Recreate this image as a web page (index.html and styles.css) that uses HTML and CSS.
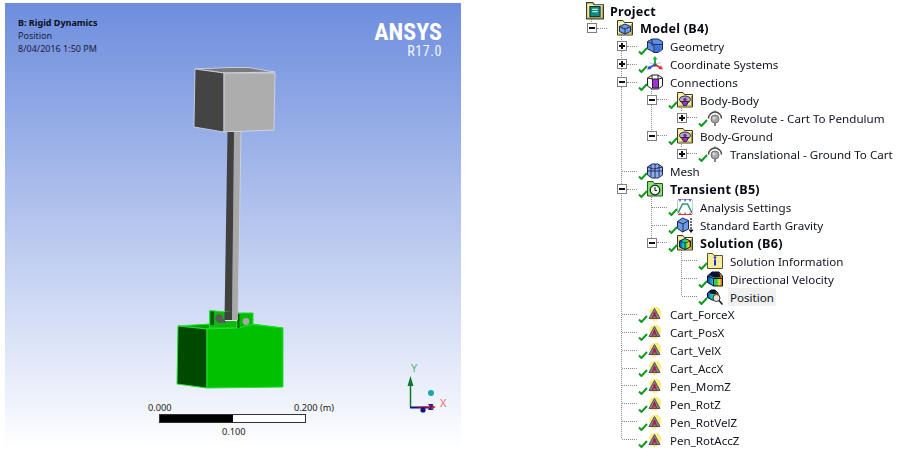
FILE: index.html
```html
<!DOCTYPE html>
<html lang="en">
<head>
<meta charset="utf-8">
<title>Rigid Dynamics - Position</title>
<link rel="stylesheet" href="styles.css">
</head>
<body>
<svg class="defs" width="0" height="0" aria-hidden="true">
  <defs>
    <linearGradient id="rainbow" x1="0" y1="0" x2="1" y2="0">
      <stop offset="0" stop-color="#1c2fd0"/><stop offset=".35" stop-color="#12c8c8"/><stop offset=".6" stop-color="#30d030"/><stop offset=".8" stop-color="#f0e020"/><stop offset="1" stop-color="#e83a10"/>
    </linearGradient>
    <symbol id="i-folder" viewBox="0 0 16 16">
      <path d="M0.500 15V0.500h5.500l1.500 2H15.500V15z" fill="#f3e89a" stroke="#3c3a20"/>
      <path d="M1.500 3.500h13" stroke="#fffbd8"/>
      <path d="M14.500 4v10.500M1.500 14h13" stroke="#a89c50"/>
    </symbol>
    <symbol id="i-project" viewBox="0 0 16 16">
      <use href="#i-folder" width="16" height="16"/>
      <rect x="3.500" y="4" width="9" height="9" fill="#0e8a80" stroke="#10303a"/>
      <path d="M5.500 6.500h5M5.500 8.500h5" stroke="#b8f0e0"/>
    </symbol>
    <symbol id="i-model" viewBox="0 0 16 16">
      <use href="#i-folder" width="16" height="16"/>
      <path d="M8 4l5.500 2.500v5L8 14l-5.500-2.500v-5z" fill="#6e9be8" stroke="#1a2a50"/>
      <path d="M2.500 6.500L8 9l5.500-2.500M8 9v5" fill="none" stroke="#1a2a50"/>
    </symbol>
    <symbol id="i-geometry" viewBox="0 0 16 16">
      <path d="M0.500 3.500L5 1h6l4.500 2.500v8L11 14.500H7l-3-2-3.500-1.500z" fill="#5c8ee6" stroke="#1c2a58"/>
      <path d="M7 6.500h8.500M7 6.500v8M0.500 3.500L7 6.500M5 1v7" fill="none" stroke="#1c2a58"/>
      <path d="M8 7.500h6.500v5L11 14H8z" fill="#3f72d6"/>
    </symbol>
    <symbol id="i-coord" viewBox="0 0 16 16">
      <path d="M8 8V2" stroke="#22b04c" stroke-width="2"/>
      <path d="M8 0L5.500 3.500h5z" fill="#22b04c"/>
      <path d="M8 8.500L3 11.500" stroke="#2a50d8" stroke-width="2"/>
      <path d="M0 13.500L2 9.500l2.500 3.500z" fill="#2a50d8"/>
      <path d="M8 8.500l5 3" stroke="#e03030" stroke-width="2"/>
      <path d="M16 13.500L14 9.500l-2.500 3.500z" fill="#e03030"/>
      <path d="M8 8.500L2 6.500M8 8.500l6-2" stroke="#c8c8c8"/>
      <circle cx="8" cy="9" r="1.800" fill="#555"/>
    </symbol>
    <symbol id="i-conn" viewBox="0 0 16 16">
      <path d="M0.500 4L5 1h6l4.500 3v8L11 15H5l-4.500-3z" fill="#fff" stroke="#222"/>
      <path d="M5.500 5h6v9h-6z" fill="#a030d8" stroke="#222"/>
      <path d="M0.500 4l5 1M11.500 5l4-1M5 1v4M11 1v4" stroke="#222" fill="none"/>
    </symbol>
    <symbol id="i-body" viewBox="0 0 16 16">
      <use href="#i-folder" width="16" height="16"/>
      <ellipse cx="8" cy="7.500" rx="5.500" ry="3.500" fill="#b8a8c8" stroke="#302838"/>
      <path d="M4.500 9.500h7L9.500 13.500h-3z" fill="#a030c8" stroke="#302838"/>
      <circle cx="8" cy="7.500" r="1.700" fill="#6a2aa0"/>
    </symbol>
    <symbol id="i-joint" viewBox="0 0 16 16">
      <path d="M1.500 8.500a6.500 6.500 0 0 1 13 0" fill="none" stroke="#444" stroke-width="1.400"/>
      <circle cx="8" cy="9" r="4" fill="#a8a8a8" stroke="#707070"/>
      <circle cx="7" cy="8" r="1.500" fill="#dcdcdc"/>
      <path d="M8 0.500v2.500M8 13v3" stroke="#666" stroke-width="1.600"/>
    </symbol>
    <symbol id="i-mesh" viewBox="0 0 16 16">
      <path d="M0.500 4L5 1h6l4.500 3v8L11 15H5l-4.500-3z" fill="#8fb0ee" stroke="#1c2450"/>
      <path d="M0.500 8h15M4 2V13.500M8 1v14M12 2V13.500M0.500 4l6 2 9-2" fill="none" stroke="#1c2450" stroke-width=".9"/>
    </symbol>
    <symbol id="i-transient" viewBox="0 0 16 16">
      <path d="M0.500 15V0.500h5.500l1.500 2H15.500V15z" fill="#8ee070" stroke="#1c5a20"/>
      <circle cx="8" cy="9" r="4.800" fill="#e8f4e0" stroke="#123" stroke-width="1.200"/>
      <path d="M8 6v3.500h2" fill="none" stroke="#123"/>
    </symbol>
    <symbol id="i-analysis" viewBox="0 0 16 16">
      <path d="M1 14L5.500 5h5L15 14" fill="none" stroke="#2f9a70" stroke-width="1.600"/>
      <path d="M0.500 1v14M15.500 1v14" stroke="#c8c8c8"/>
      <path d="M1 0.500h14" stroke="#9898c8"/>
      <path d="M2 0.500l1 2.500 1-2.500zM7 0.500l1 2.500 1-2.500zM12 0.500l1 2.500 1-2.500z" fill="#2030c8"/>
      <path d="M1 15.500h14" stroke="#d84040"/>
      <path d="M2 15.500l1-2.500 1 2.500zM7 15.500l1-2.500 1 2.500zM12 15.500l1-2.500 1 2.500z" fill="#d02020"/>
    </symbol>
    <symbol id="i-gravity" viewBox="0 0 16 16">
      <path d="M0.500 4.500L5.500 1 11.500 3.500v8.500L5.500 15 0.500 11.500z" fill="#6e9be8" stroke="#1a2a50"/>
      <path d="M0.500 4.500l5.500 2.500 5.500-3.500M6 7v8" fill="none" stroke="#1a2a50"/>
      <path d="M14 1v12" stroke="#111" stroke-dasharray="2 1" stroke-width="1.200"/>
      <path d="M11.500 12.500h5L14 16z" fill="#111"/>
    </symbol>
    <symbol id="i-solution" viewBox="0 0 16 16">
      <use href="#i-folder" width="16" height="16"/>
      <path d="M2.500 6L8 3.500 13.500 6v6L8 14.500 2.500 12z" fill="url(#rainbow)" stroke="#123"/>
      <path d="M2.500 6L8 8l5.500-2M8 8v6.500" fill="none" stroke="#123" stroke-width=".8"/>
    </symbol>
    <symbol id="i-info" viewBox="0 0 16 16">
      <path d="M0.500 15.500V0.500h5L7 2.500h8.500v13z" fill="#f8ec9c" stroke="#5c5528"/>
      <circle cx="8" cy="4.500" r="1.300" fill="#1a2ed0"/>
      <rect x="7" y="6.500" width="2" height="6" fill="#1a2ed0"/>
    </symbol>
    <symbol id="i-velocity" viewBox="0 0 16 16">
      <path d="M0.500 5L5 1h7l3.500 4v10h-9L0.500 11.500z" fill="url(#rainbow)" stroke="#101020"/>
      <path d="M0.500 5l6 2.500h9M6.500 7.500V15" fill="none" stroke="#101020"/>
      <path d="M5 1L2 4 7 6.500h7L12 1z" fill="#101030"/>
    </symbol>
    <symbol id="i-position" viewBox="0 0 16 16">
      <path d="M0.500 4L4 1h4l3 3v7H5L0.500 8.500z" fill="url(#rainbow)" stroke="#101020"/>
      <path d="M3.500 1L1.500 3.500 5 5h5L8 1z" fill="#101030"/>
      <circle cx="9.500" cy="9" r="3.500" fill="#e8e2da" stroke="#333"/>
      <path d="M12 11.500l3.500 4" stroke="#111" stroke-width="1.500"/>
    </symbol>
    <symbol id="i-probe" viewBox="0 0 16 16">
      <path d="M4 11a6 6 0 1 1 10-3l-1 5z" fill="#f6ee80"/>
      <path d="M13 11a6 6 0 0 1-10 2h9z" fill="#f6ee80"/>
      <path d="M7.500 2.500L13 12.500H2z" fill="#8a8288" stroke="#55505a"/>
      <path d="M7.500 6L5.500 12M7.500 6L9.500 12" stroke="#98204a" stroke-width="1.100"/>
      <circle cx="7.500" cy="9.500" r="1.200" fill="#b02050"/>
    </symbol>
    <symbol id="i-check" viewBox="0 0 10 8">
      <path d="M1 4.500L3.500 7 9 1" fill="none" stroke="#109a20" stroke-width="2"/>
    </symbol>
  </defs>
</svg>

<main class="page">
  <section class="viewport">
    <svg class="scene" viewBox="0 0 456 447" width="456" height="447" aria-hidden="true">
      <g transform="translate(-5 -3)">
        <g stroke="#d8dce8" stroke-width=".8" stroke-linejoin="round">
          <path d="M195 69L231 67.500H248L275 72L224 73z" fill="#7a7a7a"/>
          <path d="M195 69L224 73V132L194 127z" fill="#444"/>
          <path d="M224 73H275L274 130L224 132z" fill="#adadad"/>
        </g>
        <path d="M234 132H241L238 320H232z" fill="#a8a8a8"/>
        <path d="M227.500 132H234L232 320H224.500z" fill="#404040"/>
        <path d="M241 132L238 320" stroke="#d4d8e4" stroke-width=".8"/>
        <g stroke="#22e030" stroke-width="1" stroke-linejoin="round">
          <path d="M178 326L210 324H237L253 324L283 328L207 329z" fill="#00a400"/>
          <path d="M209.500 310.500L237 313V328H209.500z" fill="#10b810"/>
          <path d="M237 313H253V328H237z" fill="#00bc00"/>
          <path d="M178 326L207 329V388L177 384z" fill="#004a00"/>
          <path d="M207 329L237 328L253 324.500L283 328V387L207 388z" fill="#00c000"/>
        </g>
        <path d="M210.500 311.500h3.500v13.500h-3.500zM237.500 314h2v14h-2z" fill="#006000"/>
        <path d="M218 319h8v4h-8z" fill="#5a5a5a"/>
        <circle cx="219" cy="318" r="3.800" fill="#5a5a5a"/>
        <path d="M224.500 312h7.500v8h-7.500z" fill="#404040"/>
        <path d="M232 312h6v8h-6z" fill="#a8a8a8"/>
        <path d="M225 320.500h12" stroke="#e8e8e8"/>
        <circle cx="246" cy="321.500" r="3.400" fill="#a8a8a8"/>
        <g class="triad">
          <path d="M410.500 385V407" stroke="#0a7a30" stroke-width="1.500"/>
          <path d="M410.500 376L407.500 386H413.500z" fill="#0a7a30"/>
          <path d="M410 407.500H434" stroke="#101090" stroke-width="2"/>
          <path d="M418 407H434" stroke="#d02020" stroke-width="1"/>
          <path d="M436 407L429 404V410z" fill="#d02020"/>
          <circle cx="423" cy="410" r="2.600" fill="#101090"/>
          <circle cx="431" cy="393" r="3" fill="#18a8b0"/>
        </g>
      </g>
    </svg>

    <div class="caption">
      <strong class="caption-title">B: Rigid Dynamics</strong>
      <span>Position</span>
      <span>8/04/2016 1:50 PM</span>
    </div>
    <div class="brand">
      <span class="brand-name">ANSYS</span>
      <span class="brand-rel">R17.0</span>
    </div>

    <span class="axis axis-y">Y</span>
    <span class="axis axis-x">X</span>
    <span class="axis axis-z">Z</span>

    <div class="scale">
      <div class="scale-top"><span>0.000</span><span>0.200 (m)</span></div>
      <div class="scale-bar"><i class="scale-fill"></i></div>
      <div class="scale-mid">0.100</div>
    </div>
  </section>

  <nav class="tree">
    <svg class="guides" width="330" height="461" aria-hidden="true">
      <g stroke="#8a8a8a" stroke-dasharray="1 1" fill="none">
        <path d="M4.500 17V24"/>
        <path d="M34.500 33V438.500"/>
        <path d="M64.500 87V134M64.500 197V239"/>
        <path d="M94.500 104V111M94.500 140V147M94.500 250V295"/>
      </g>
    </svg>

    <div class="row root"><svg class="icon icon-root"><use href="#i-project"/></svg><span class="label strong root-label">Project</span></div>
    <div class="row l1"><span class="tog minus"></span><span class="dash"></span><span class="cell"><svg class="icon"><use href="#i-model"/></svg></span><span class="label strong">Model (B4)</span></div>
    <div class="row l2"><span class="tog plus"></span><span class="dash"></span><span class="cell"><svg class="check"><use href="#i-check"/></svg><svg class="icon"><use href="#i-geometry"/></svg></span><span class="label">Geometry</span></div>
    <div class="row l2"><span class="tog plus"></span><span class="dash"></span><span class="cell"><svg class="check"><use href="#i-check"/></svg><svg class="icon"><use href="#i-coord"/></svg></span><span class="label">Coordinate Systems</span></div>
    <div class="row l2"><span class="tog minus"></span><span class="dash"></span><span class="cell"><svg class="check"><use href="#i-check"/></svg><svg class="icon"><use href="#i-conn"/></svg></span><span class="label">Connections</span></div>
    <div class="row l3"><span class="tog minus"></span><span class="dash"></span><span class="cell"><svg class="check"><use href="#i-check"/></svg><svg class="icon"><use href="#i-body"/></svg></span><span class="label">Body-Body</span></div>
    <div class="row l4"><span class="tog plus"></span><span class="dash"></span><span class="cell"><svg class="check"><use href="#i-check"/></svg><svg class="icon"><use href="#i-joint"/></svg></span><span class="label">Revolute - Cart To Pendulum</span></div>
    <div class="row l3"><span class="tog minus"></span><span class="dash"></span><span class="cell"><svg class="check"><use href="#i-check"/></svg><svg class="icon"><use href="#i-body"/></svg></span><span class="label">Body-Ground</span></div>
    <div class="row l4"><span class="tog plus"></span><span class="dash"></span><span class="cell"><svg class="check"><use href="#i-check"/></svg><svg class="icon"><use href="#i-joint"/></svg></span><span class="label">Translational - Ground To Cart</span></div>
    <div class="row l2"><span class="tog none"></span><span class="dash leaf"></span><span class="cell"><svg class="check"><use href="#i-check"/></svg><svg class="icon"><use href="#i-mesh"/></svg></span><span class="label">Mesh</span></div>
    <div class="row l2"><span class="tog minus"></span><span class="dash"></span><span class="cell"><svg class="check"><use href="#i-check"/></svg><svg class="icon"><use href="#i-transient"/></svg></span><span class="label strong">Transient (B5)</span></div>
    <div class="row l3"><span class="tog none"></span><span class="dash leaf"></span><span class="cell"><svg class="check"><use href="#i-check"/></svg><svg class="icon"><use href="#i-analysis"/></svg></span><span class="label">Analysis Settings</span></div>
    <div class="row l3"><span class="tog none"></span><span class="dash leaf"></span><span class="cell"><svg class="check"><use href="#i-check"/></svg><svg class="icon"><use href="#i-gravity"/></svg></span><span class="label">Standard Earth Gravity</span></div>
    <div class="row l3"><span class="tog minus"></span><span class="dash"></span><span class="cell"><svg class="check"><use href="#i-check"/></svg><svg class="icon"><use href="#i-solution"/></svg></span><span class="label strong">Solution (B6)</span></div>
    <div class="row l4"><span class="tog none"></span><span class="dash leaf"></span><span class="cell"><svg class="check"><use href="#i-check"/></svg><svg class="icon"><use href="#i-info"/></svg></span><span class="label">Solution Information</span></div>
    <div class="row l4"><span class="tog none"></span><span class="dash leaf"></span><span class="cell"><svg class="check"><use href="#i-check"/></svg><svg class="icon"><use href="#i-velocity"/></svg></span><span class="label">Directional Velocity</span></div>
    <div class="row l4"><span class="tog none"></span><span class="dash leaf"></span><span class="cell"><svg class="check"><use href="#i-check"/></svg><svg class="icon"><use href="#i-position"/></svg></span><span class="label selected">Position</span></div>
    <div class="row l2"><span class="tog none"></span><span class="dash leaf"></span><span class="cell"><svg class="check"><use href="#i-check"/></svg><svg class="icon"><use href="#i-probe"/></svg></span><span class="label">Cart_ForceX</span></div>
    <div class="row l2"><span class="tog none"></span><span class="dash leaf"></span><span class="cell"><svg class="check"><use href="#i-check"/></svg><svg class="icon"><use href="#i-probe"/></svg></span><span class="label">Cart_PosX</span></div>
    <div class="row l2"><span class="tog none"></span><span class="dash leaf"></span><span class="cell"><svg class="check"><use href="#i-check"/></svg><svg class="icon"><use href="#i-probe"/></svg></span><span class="label">Cart_VelX</span></div>
    <div class="row l2"><span class="tog none"></span><span class="dash leaf"></span><span class="cell"><svg class="check"><use href="#i-check"/></svg><svg class="icon"><use href="#i-probe"/></svg></span><span class="label">Cart_AccX</span></div>
    <div class="row l2"><span class="tog none"></span><span class="dash leaf"></span><span class="cell"><svg class="check"><use href="#i-check"/></svg><svg class="icon"><use href="#i-probe"/></svg></span><span class="label">Pen_MomZ</span></div>
    <div class="row l2"><span class="tog none"></span><span class="dash leaf"></span><span class="cell"><svg class="check"><use href="#i-check"/></svg><svg class="icon"><use href="#i-probe"/></svg></span><span class="label">Pen_RotZ</span></div>
    <div class="row l2"><span class="tog none"></span><span class="dash leaf"></span><span class="cell"><svg class="check"><use href="#i-check"/></svg><svg class="icon"><use href="#i-probe"/></svg></span><span class="label">Pen_RotVelZ</span></div>
    <div class="row l2"><span class="tog none"></span><span class="dash leaf"></span><span class="cell"><svg class="check"><use href="#i-check"/></svg><svg class="icon"><use href="#i-probe"/></svg></span><span class="label">Pen_RotAccZ</span></div>
  </nav>
</main>
</body>
</html>
```

FILE: styles.css
```css
* { box-sizing: border-box; }

html, body {
  margin: 0;
  height: 100%;
  background: #fff;
  overflow: hidden;
}

.defs { position: absolute; }

.page {
  display: flex;
  align-items: flex-start;
  font-family: "Noto Sans", "Open Sans", sans-serif;
  color: #11141f;
  filter: blur(0.3px);
}

/* 3D viewport */
.viewport {
  position: relative;
  flex: none;
  width: 456px;
  height: 447px;
  margin: 3px 0 0 5px;
  background: linear-gradient(180deg, #6d8ddd 0%, #ffffff 100%);
}

.scene {
  position: absolute;
  inset: 0;
  display: block;
}

.caption {
  position: absolute;
  left: 13px;
  top: 13px;
  display: flex;
  flex-direction: column;
  font-size: 9px;
  line-height: 13px;
  color: #18213a;
}

.caption-title {
  color: #0a0f1e;
  font-weight: 700;
}

.brand {
  position: absolute;
  right: 19px;
  top: 18px;
  display: flex;
  flex-direction: column;
  align-items: flex-end;
  color: #fff;
  font-family: "Liberation Sans Narrow", "Roboto Condensed", "Liberation Sans", sans-serif;
}

.brand-name {
  font-size: 24px;
  line-height: 23px;
  font-weight: 700;
}

.brand-rel {
  font-size: 14px;
  line-height: 14px;
  letter-spacing: .6px;
  color: #f2f5fc;
}

.axis {
  position: absolute;
  font-size: 11px;
  line-height: 12px;
}

.axis-y { left: 406px; top: 359px; color: #62b488; }
.axis-x { left: 435px; top: 394px; color: #ee6c6c; }
.axis-z { left: 423px; top: 398px; color: #14149a; font-weight: 700; font-size: 9px; }

.scale {
  position: absolute;
  left: 143px;
  top: 399px;
  width: 186px;
  font-size: 9.2px;
  line-height: 12px;
  color: #1a1a1a;
}

.scale-top {
  display: flex;
  justify-content: space-between;
}

.scale-bar {
  width: 147px;
  height: 9px;
  margin: 0 0 0 11px;
  border: 1px solid #333;
  background: #fff;
}

.scale-fill {
  display: block;
  width: 73px;
  height: 100%;
  background: #000;
}

.scale-mid {
  margin: 3px 0 0 74px;
}

/* Outline tree */
.tree {
  position: relative;
  flex: none;
  width: 322px;
  margin: 1.6px 0 0 126px;
  font-size: 11.6px;
}

.guides {
  position: absolute;
  left: 0;
  top: -1.6px;
}

.row {
  position: relative;
  display: flex;
  align-items: center;
  height: 17.875px;
}

.l2 { margin-left: 30px; }
.l3 { margin-left: 60px; }
.l4 { margin-left: 90px; }

.tog {
  position: relative;
  flex: none;
  width: 10px;
  height: 10px;
  border: 1px solid #808080;
  background: #fff;
}

.tog::before {
  content: "";
  position: absolute;
  left: 1px;
  top: 3px;
  width: 6px;
  height: 2px;
  background: #111;
}

.plus::after {
  content: "";
  position: absolute;
  left: 3px;
  top: 1px;
  width: 2px;
  height: 6px;
  background: #111;
}

.none {
  border: 0;
  background: none;
}

.none::before { display: none; }

.dash {
  flex: none;
  width: 10px;
  height: 0;
  border-top: 1px dotted #8a8a8a;
}

.leaf {
  width: 15px;
  margin-left: -5px;
}

.cell {
  position: relative;
  flex: none;
  display: flex;
  align-items: center;
  width: 30px;
  height: 100%;
  padding-left: 10px;
}

.icon {
  flex: none;
  display: block;
  width: 16px;
  height: 16px;
}

.check {
  position: absolute;
  left: 1px;
  bottom: 0;
  z-index: 1;
  width: 10px;
  height: 8px;
}

.label {
  margin-left: 1px;
  padding: 1px 2px 0;
  line-height: 17px;
  white-space: nowrap;
}

.strong {
  font-weight: 700;
  font-size: 12.6px;
  letter-spacing: .25px;
  color: #070a14;
}

.selected { background: #f0f0f0; }

.icon-root {
  width: 18px;
  height: 18px;
  margin-left: -1px;
}

.root-label {
  margin-left: 4px;
}
```
